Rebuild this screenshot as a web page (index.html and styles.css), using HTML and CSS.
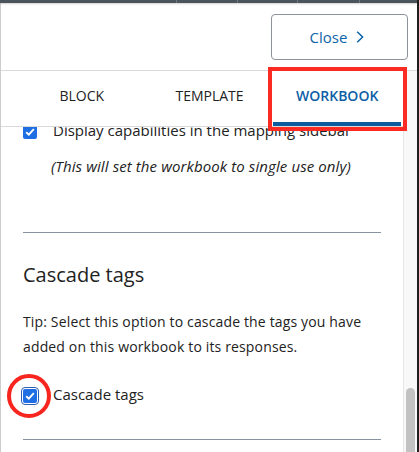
FILE: index.html
```html
<!DOCTYPE html>
<html lang="en">
<head>
<meta charset="utf-8">
<title>Workbook settings</title>
<link rel="stylesheet" href="styles.css">
</head>
<body>
<div class="frame">
  <div class="panel">
    <div class="topstrip">
      <span class="seg s1"></span><span class="seg s2"></span><span class="seg s3"></span><span class="seg s4"></span><span class="seg s5"></span>
    </div>
    <header class="header">
      <button class="close-btn" type="button">Close
        <svg class="chev" width="8" height="12" viewBox="0 0 8 12"><path d="M1.2 0.8 L6.6 6 L1.2 11.2" fill="none" stroke="currentColor" stroke-width="1.5"/></svg>
      </button>
    </header>
    <div class="body">
      <div class="main">
        <nav class="tabs">
          <div class="tab">Block</div>
          <div class="tab">Template</div>
          <div class="tab active">Workbook</div>
        </nav>
        <div class="pane">
          <div class="check-row">
            <span class="box"><svg width="10" height="8" viewBox="0 0 10 8"><path d="M1.2 4.2 L3.8 6.6 L8.8 1.2" fill="none" stroke="#fff" stroke-width="1.9"/></svg></span>
            <span class="label">Display capabilities in the mapping sidebar</span>
          </div>
          <p class="note">(This will set the workbook to single use only)</p>
          <hr class="rule rule1">
          <h2 class="heading">Cascade tags</h2>
          <p class="tip">Tip: Select this option to cascade the tags you have added on this workbook to its responses.</p>
          <div class="check-row row2">
            <span class="box focus"><svg width="10" height="8" viewBox="0 0 10 8"><path d="M1.2 4.2 L3.8 6.6 L8.8 1.2" fill="none" stroke="#fff" stroke-width="1.9"/></svg></span>
            <span class="label">Cascade tags</span>
          </div>
          <hr class="rule rule2">
        </div>
      </div>
      <div class="track">
        <div class="track-space"></div>
        <div class="thumb"></div>
      </div>
    </div>
  </div>
</div>
<div class="annot-rect"></div>
<div class="annot-circle"></div>
</body>
</html>
```
FILE: styles.css
```css
* { box-sizing: border-box; }
html, body { margin: 0; padding: 0; }
body {
  width: 419px;
  height: 452px;
  overflow: hidden;
  position: relative;
  background: #fff;
  font-family: "Open Sans", "Noto Sans", sans-serif;
  color: #222;
}
.frame {
  width: 419px;
  height: 452px;
  border-right: 2px solid #1e1e1e;
  display: flex;
}
.panel {
  flex: 1;
  display: flex;
  flex-direction: column;
  border-left: 1px solid #cdcdcd;
  min-width: 0;
}
.topstrip {
  height: 3px;
  display: flex;
  background: #4b535d;
  box-shadow: 0 1px 2px rgba(0,0,0,0.18);
  margin-left: -1px;
  position: relative;
  z-index: 1;
}
.seg { height: 3px; }
.s1 { width: 176px; }
.s2 { width: 61px; border-left: 1px solid #6e767f; }
.s3 { width: 60px; border-left: 1px solid #6e767f; }
.s4 { width: 62px; border-left: 1px solid #6e767f; }
.s5 { flex: 1; border-left: 1px solid #6e767f; }
.header {
  height: 68px;
  border-bottom: 1px solid #dadada;
  display: flex;
  justify-content: flex-end;
  align-items: flex-start;
  padding: 11px 9px 0 0;
}
.close-btn {
  width: 137px;
  height: 46px;
  border: 1px solid #8d9298;
  border-radius: 4px;
  background: #fff;
  color: #0d64a8;
  font-family: "Open Sans", "Noto Sans", sans-serif;
  font-size: 15px;
  display: flex;
  align-items: center;
  justify-content: center;
  gap: 9px;
  padding: 0 5px 1px 0;
}
.chev { display: block; margin-top: 1px; }
.body {
  flex: 1;
  display: flex;
  min-height: 0;
}
.main {
  flex: 1;
  display: flex;
  flex-direction: column;
  min-width: 0;
}
.tabs {
  height: 56px;
  flex-shrink: 0;
  display: flex;
  padding: 0 2px 0 17px;
  border-bottom: 1px solid #dadada;
}
.tab {
  flex: 1;
  text-align: center;
  text-transform: uppercase;
  font-size: 14px;
  line-height: 20px;
  padding-top: 15px;
  color: #222;
}
.tab.active {
  color: #0d5ea6;
  font-weight: 600;
  border-bottom: 4px solid #0b5c9e;
}
.pane {
  flex: 1;
  overflow: hidden;
  display: flex;
  flex-direction: column;
  justify-content: flex-end;
  padding: 0 22px 12px 22px;
}
.check-row {
  display: flex;
  align-items: center;
  gap: 16px;
  font-size: 15px;
  line-height: 22px;
  flex-shrink: 0;
}
.box {
  width: 14px;
  height: 14px;
  border-radius: 2px;
  background: #1f6fe4;
  display: flex;
  align-items: center;
  justify-content: center;
  flex-shrink: 0;
  margin-top: 3px;
}
.box.focus {
  outline: 1px solid #2b5fb3;
  outline-offset: 1px;
}
.note {
  margin: 14px 0 0 0;
  padding-left: 28px;
  font-style: italic;
  font-size: 15px;
  letter-spacing: 0.1px;
  line-height: 22px;
  flex-shrink: 0;
}
.rule {
  border: 0;
  height: 1px;
  background: #8794a0;
  margin: 0;
  flex-shrink: 0;
}
.rule1 { margin-top: 55px; }
.heading {
  margin: 28px 0 0 0;
  font-size: 20px;
  font-weight: 400;
  line-height: 28px;
  flex-shrink: 0;
}
.tip {
  margin: 20px 0 0 0;
  font-size: 14px;
  letter-spacing: 0.15px;
  line-height: 25px;
  flex-shrink: 0;
}
.row2 { margin-top: 24px; }
.rule2 { margin-top: 34px; }
.track {
  width: 14px;
  border-left: 1px solid #e6e6e6;
  background: #f8f8f8;
  display: flex;
  flex-direction: column;
  padding: 0 2px;
}
.track-space { height: 317px; flex-shrink: 0; }
.thumb {
  flex: 1;
  background: #c2c2c2;
  border-radius: 5px 5px 0 0;
}
.annot-rect {
  position: absolute;
  left: 268px;
  top: 67px;
  width: 139px;
  height: 64px;
  border: 4px solid #fb2a22;
}
.annot-circle {
  position: absolute;
  left: 7px;
  top: 374px;
  width: 44px;
  height: 44px;
  border: 4px solid #f8251e;
  border-radius: 50%;
}
```
